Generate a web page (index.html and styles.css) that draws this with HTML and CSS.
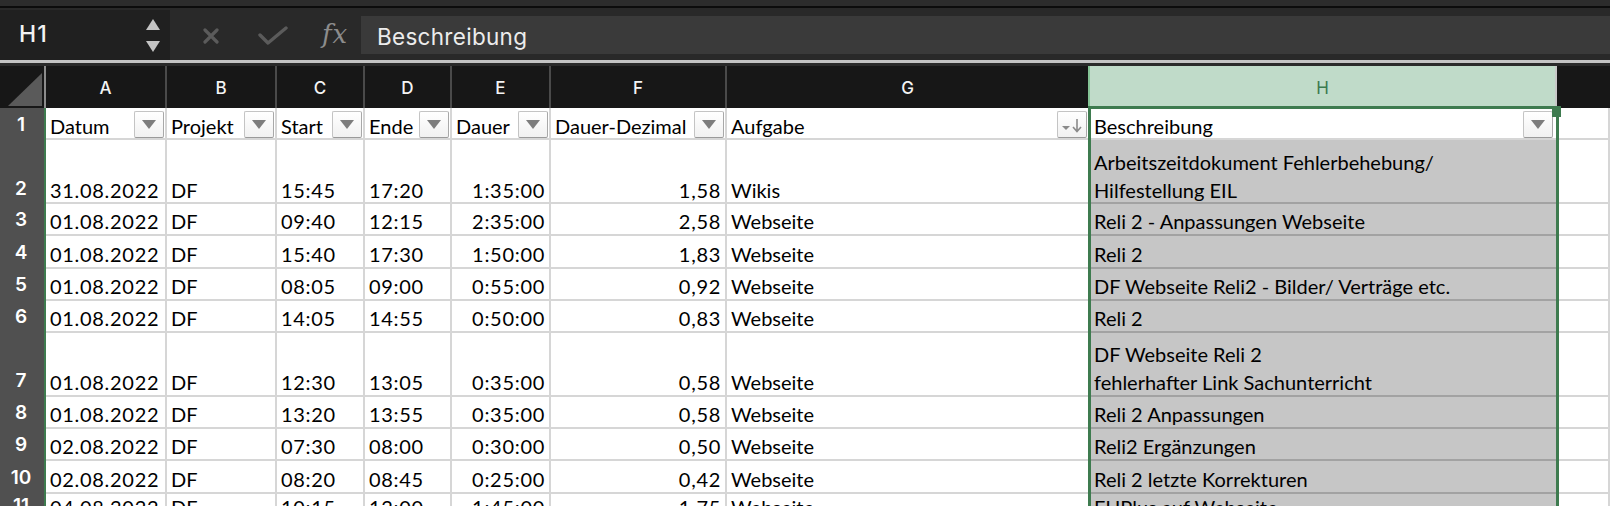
FILE: index.html
```html
<!DOCTYPE html>
<html lang="de">
<head>
<meta charset="utf-8">
<title>Arbeitszeit</title>
<link rel="stylesheet" href="styles.css">
</head>
<body>
<div class="app">
  <div class="topstrip"></div>
  <div class="formula-row">
    <div class="namebox">
      <span class="ref">H1</span>
      <span class="spin">
        <svg width="14" height="11" viewBox="0 0 14 11"><path d="M7 0 L14 11 H0 Z" fill="#c4c4c4"/></svg>
        <svg width="14" height="11" viewBox="0 0 14 11"><path d="M0 0 H14 L7 11 Z" fill="#c4c4c4"/></svg>
      </span>
    </div>
    <div class="fbtns">
      <svg class="ic-x" width="16" height="16" viewBox="0 0 16 16"><path d="M2 2 L14 14 M14 2 L2 14" stroke="#5b5b5b" stroke-width="3.2" stroke-linecap="round"/></svg>
      <svg class="ic-ok" width="30" height="20" viewBox="0 0 30 20"><path d="M2 9 L10 17 L28 2" fill="none" stroke="#5b5b5b" stroke-width="3.4" stroke-linecap="round" stroke-linejoin="round"/></svg>
      <span class="fx">fx</span>
    </div>
    <div class="finput">Beschreibung</div>
  </div>
  <div class="divider"></div>

  <div class="sheet">
    <div class="row head">
      <div class="corner"><svg width="34" height="33" viewBox="0 0 34 33"><path d="M34 0 V33 H0 Z" fill="#5a5a5a"/></svg></div>
      <div class="ch">A</div><div class="ch">B</div><div class="ch">C</div><div class="ch">D</div>
      <div class="ch">E</div><div class="ch">F</div><div class="ch">G</div><div class="ch sel">H</div><div class="ch last"></div>
    </div>

    <div class="row r1">
      <div class="rh">1</div>
      <div class="c f"><span>Datum</span><span class="fb"><svg width="14" height="9" viewBox="0 0 14 9"><path d="M0 0 H14 L7 9 Z" fill="#7d7d7d"/></svg></span></div>
      <div class="c f"><span>Projekt</span><span class="fb"><svg width="14" height="9" viewBox="0 0 14 9"><path d="M0 0 H14 L7 9 Z" fill="#7d7d7d"/></svg></span></div>
      <div class="c f"><span>Start</span><span class="fb"><svg width="14" height="9" viewBox="0 0 14 9"><path d="M0 0 H14 L7 9 Z" fill="#7d7d7d"/></svg></span></div>
      <div class="c f"><span>Ende</span><span class="fb"><svg width="14" height="9" viewBox="0 0 14 9"><path d="M0 0 H14 L7 9 Z" fill="#7d7d7d"/></svg></span></div>
      <div class="c f"><span>Dauer</span><span class="fb"><svg width="14" height="9" viewBox="0 0 14 9"><path d="M0 0 H14 L7 9 Z" fill="#7d7d7d"/></svg></span></div>
      <div class="c f"><span>Dauer-Dezimal</span><span class="fb"><svg width="14" height="9" viewBox="0 0 14 9"><path d="M0 0 H14 L7 9 Z" fill="#7d7d7d"/></svg></span></div>
      <div class="c f"><span>Aufgabe</span><span class="fb sort"><svg width="22" height="16" viewBox="0 0 22 16"><path d="M1 9 H9 L5 13 Z" fill="#8a8a8a"/><path d="M16 2 V14 M12 10 L16 14.5 L20 10" fill="none" stroke="#8a8a8a" stroke-width="1.6"/></svg></span></div>
      <div class="c f hact"><span>Beschreibung</span><span class="fb"><svg width="14" height="9" viewBox="0 0 14 9"><path d="M0 0 H14 L7 9 Z" fill="#7d7d7d"/></svg></span></div>
      <div class="c"></div>
    </div>

    <div class="row r2">
      <div class="rh">2</div>
      <div class="c d">31.08.2022</div><div class="c">DF</div><div class="c d">15:45</div><div class="c d">17:20</div>
      <div class="c d n">1:35:00</div><div class="c d n">1,58</div><div class="c">Wikis</div>
      <div class="c h wrap"><span>Arbeitszeitdokument Fehlerbehebung/</span><span>Hilfestellung EIL</span></div><div class="c"></div>
    </div>
    <div class="row r3">
      <div class="rh">3</div>
      <div class="c d">01.08.2022</div><div class="c">DF</div><div class="c d">09:40</div><div class="c d">12:15</div>
      <div class="c d n">2:35:00</div><div class="c d n">2,58</div><div class="c">Webseite</div>
      <div class="c h">Reli 2 - Anpassungen Webseite</div><div class="c"></div>
    </div>
    <div class="row r3">
      <div class="rh">4</div>
      <div class="c d">01.08.2022</div><div class="c">DF</div><div class="c d">15:40</div><div class="c d">17:30</div>
      <div class="c d n">1:50:00</div><div class="c d n">1,83</div><div class="c">Webseite</div>
      <div class="c h">Reli 2</div><div class="c"></div>
    </div>
    <div class="row r3">
      <div class="rh">5</div>
      <div class="c d">01.08.2022</div><div class="c">DF</div><div class="c d">08:05</div><div class="c d">09:00</div>
      <div class="c d n">0:55:00</div><div class="c d n">0,92</div><div class="c">Webseite</div>
      <div class="c h">DF Webseite Reli2 - Bilder/ Verträge etc.</div><div class="c"></div>
    </div>
    <div class="row r3">
      <div class="rh">6</div>
      <div class="c d">01.08.2022</div><div class="c">DF</div><div class="c d">14:05</div><div class="c d">14:55</div>
      <div class="c d n">0:50:00</div><div class="c d n">0,83</div><div class="c">Webseite</div>
      <div class="c h">Reli 2</div><div class="c"></div>
    </div>
    <div class="row r7">
      <div class="rh">7</div>
      <div class="c d">01.08.2022</div><div class="c">DF</div><div class="c d">12:30</div><div class="c d">13:05</div>
      <div class="c d n">0:35:00</div><div class="c d n">0,58</div><div class="c">Webseite</div>
      <div class="c h wrap"><span>DF Webseite Reli 2</span><span>fehlerhafter Link Sachunterricht</span></div><div class="c"></div>
    </div>
    <div class="row r3">
      <div class="rh">8</div>
      <div class="c d">01.08.2022</div><div class="c">DF</div><div class="c d">13:20</div><div class="c d">13:55</div>
      <div class="c d n">0:35:00</div><div class="c d n">0,58</div><div class="c">Webseite</div>
      <div class="c h">Reli 2 Anpassungen</div><div class="c"></div>
    </div>
    <div class="row r3">
      <div class="rh">9</div>
      <div class="c d">02.08.2022</div><div class="c">DF</div><div class="c d">07:30</div><div class="c d">08:00</div>
      <div class="c d n">0:30:00</div><div class="c d n">0,50</div><div class="c">Webseite</div>
      <div class="c h">Reli2 Ergänzungen</div><div class="c"></div>
    </div>
    <div class="row r3">
      <div class="rh">10</div>
      <div class="c d">02.08.2022</div><div class="c">DF</div><div class="c d">08:20</div><div class="c d">08:45</div>
      <div class="c d n">0:25:00</div><div class="c d n">0,42</div><div class="c">Webseite</div>
      <div class="c h">Reli 2 letzte Korrekturen</div><div class="c"></div>
    </div>
    <div class="row r11">
      <div class="rh">11</div>
      <div class="c d">04.08.2022</div><div class="c">DF</div><div class="c d">10:15</div><div class="c d">12:00</div>
      <div class="c d n">1:45:00</div><div class="c d n">1,75</div><div class="c">Webseite</div>
      <div class="c h">EUPlus auf Webseite</div><div class="c"></div>
    </div>

    <div class="selection"></div>
    <div class="handle"></div>
  </div>
</div>
</body>
</html>
```

FILE: styles.css
```css
* { box-sizing: border-box; }
html, body { margin: 0; padding: 0; }
body {
  width: 1610px;
  height: 506px;
  overflow: hidden;
  background: #ffffff;
  font-family: "Lato", "Liberation Sans", sans-serif;
}
.app { width: 1610px; height: 506px; overflow: hidden; display: flex; flex-direction: column; }

.topstrip { height: 8px; background: #2c2c2c; border-bottom: 2px solid #0c0c0c; flex: none; }

.formula-row {
  height: 52px;
  flex: none;
  display: flex;
  background: #292929;
}
.namebox {
  width: 170px;
  flex: none;
  background: #202020;
  display: flex;
  align-items: center;
  justify-content: space-between;
  padding: 0 10px 2px 19px;
  margin-top: 2px;
}
.ref { font-family: "Inter", "Roboto", sans-serif; color: #f2f2f2; font-size: 23px; font-weight: 500; letter-spacing: 1px; }
.spin { display: flex; flex-direction: column; gap: 11px; margin-top: 2px; }
.spin svg { display: block; }

.fbtns {
  width: 191px;
  flex: none;
  display: flex;
  align-items: center;
  padding-left: 33px;
}
.ic-x { margin-top: 4px; }
.ic-ok { margin-left: 39px; margin-top: 4px; }
.fx {
  margin-left: 34px;
  font-family: "DejaVu Serif", "Liberation Serif", serif;
  font-style: italic;
  font-size: 26px;
  color: #8c8c8c;
  letter-spacing: 1px;
}
.finput {
  flex: 1;
  margin: 8px 0 6px;
  background: #3a3a3a;
  color: #ececec;
  font-family: "Inter", "Roboto", sans-serif;
  font-size: 22.5px;
  letter-spacing: 0.3px;
  padding: 3px 0 0 16px;
  display: flex;
  align-items: center;
}

.divider {
  height: 6px;
  flex: none;
  background: #2a2a2a;
  border-top: 3px solid #c4c4c4;
}

.sheet { position: relative; flex: 1; overflow: hidden; }

.row {
  display: grid;
  grid-template-columns: 46px 121px 110px 88px 87px 99px 176px 363px 467px 1fr;
}
.head { height: 42px; background: #171717; }
.r1 { height: 32px; }
.r2 { height: 64px; }
.r3 { height: 32.33px; }
.r7 { height: 63.5px; }
.r11 { height: 27px; }

.corner {
  border-right: 2px solid #8c8c8c;
  display: flex;
  align-items: flex-end;
  justify-content: flex-end;
  padding: 0 2px 2px 0;
}
.corner svg { display: block; }
.ch {
  color: #f4f4f4;
  font-family: "Inter", "Roboto", sans-serif;
  font-weight: 500;
  font-size: 17px;
  display: flex;
  align-items: center;
  justify-content: center;
  border-right: 2px solid #4a4a4a;
  padding-top: 2px;
}
.ch.sel {
  background: #c0dbc9;
  color: #3c7a4f;
  font-weight: 400;
  border-left: 2px solid #86c496;
  margin-left: -2px;
  border-right: 2px solid #c8c8c8;
}
.ch.last { border-right: none; }

.rh {
  background: #505050;
  border-right: 2px solid #3e7b4f;
  color: #ffffff;
  font-family: "Inter", "Roboto", sans-serif;
  font-weight: 600;
  font-size: 19px;
  display: flex;
  align-items: flex-end;
  justify-content: center;
  padding: 0 2px 3px 0;
  line-height: 24px;
}

.c {
  border-right: 2px solid #d6d6d6;
  border-bottom: 2px solid #d6d6d6;
  font-size: 20px;
  color: #000;
  display: flex;
  align-items: flex-end;
  padding: 0 4px 0 4px;
  line-height: 24px;
  white-space: nowrap;
  overflow: hidden;
}
.r3 .c, .r7 .c { padding-bottom: 1px; }
.r3 .rh, .r7 .rh { padding-bottom: 4px; }
.c.d { letter-spacing: 0.7px; }
.c.n { justify-content: flex-end; padding-right: 4px; }
.c.f { justify-content: space-between; padding: 0 0 0 4px; align-items: flex-end; overflow: visible; }
.c.h { background: #c6c6c6; border-bottom-color: #a2a2a2; border-right: none; }
.c.hact { background: #fff; border-right: none; }
.c.wrap { flex-direction: column; align-items: flex-start; justify-content: flex-end; }
.c.wrap span { line-height: 32px; }
.c.wrap span:last-child { line-height: 24px; }

.fb {
  width: 30px;
  height: 27px;
  flex: none;
  background: linear-gradient(#ffffff, #f1f1f1);
  border: 1px solid #c4c4c4;
  border-right-color: #a8a8a8;
  border-bottom-color: #9a9a9a;
  border-radius: 2px;
  display: flex;
  align-items: center;
  justify-content: center;
  margin-right: 1px;
}
.fb svg { display: block; }
.hact .fb { margin-right: 4px; }

.selection {
  position: absolute;
  left: 1088px;
  top: 40px;
  width: 471px;
  height: 420px;
  border: 3px solid #3e7b4f;
  pointer-events: none;
}
.handle {
  position: absolute;
  left: 1552px;
  top: 40px;
  width: 9px;
  height: 11px;
  background: #3e7b4f;
}
```
